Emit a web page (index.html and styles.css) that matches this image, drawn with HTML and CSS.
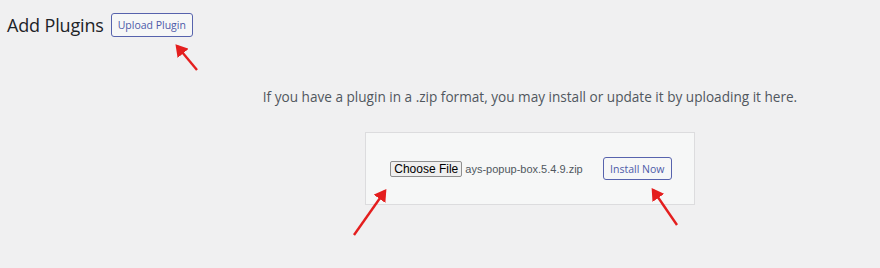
FILE: index.html
```html
<!DOCTYPE html>
<html lang="en">
<head>
    <meta charset="UTF-8">
    <title>Add Plugins</title>
    <link rel="stylesheet" href="styles.css">
</head>
<body>
    <div class="wrap">
        <div class="page-head">
            <h1>Add Plugins</h1>
            <button class="wp-btn upload-btn">Upload Plugin</button>
        </div>

        <!-- Upload form -->
        <div class="upload-area">
            <p class="install-help">If you have a plugin in a .zip format, you may install or update it by uploading it here.</p>
            <form class="upload-form">
                <span class="file-pick">
                    <span class="file-btn">Choose File</span>
                    <span class="file-name">ays-popup-box.5.4.9.zip</span>
                </span>
                <button type="button" class="wp-btn install-btn">Install Now</button>
            </form>
        </div>

        <!-- Annotation arrows -->
        <svg class="arrows" width="880" height="268" viewBox="0 0 880 268">
            <defs>
                <marker id="head" markerWidth="6" markerHeight="6" refX="4" refY="3" orient="auto" markerUnits="strokeWidth">
                    <path d="M0,0 L5,3 L0,6 Z" fill="#e41e1e"/>
                </marker>
            </defs>
            <line x1="197" y1="70" x2="177" y2="46" stroke="#e41e1e" stroke-width="2.4" marker-end="url(#head)"/>
            <line x1="354" y1="235" x2="385" y2="191" stroke="#e41e1e" stroke-width="2.4" marker-end="url(#head)"/>
            <line x1="677" y1="225" x2="653" y2="190" stroke="#e41e1e" stroke-width="2.4" marker-end="url(#head)"/>
        </svg>
    </div>
</body>
</html>
```

FILE: styles.css
```css
body {
    margin: 0;
    background-color: #f0f0f1;
    font-family: 'Open Sans', 'Noto Sans', sans-serif;
    color: #3c434a;
}
.wrap {
    position: relative;
    height: 268px;
    overflow: hidden;
}
.page-head {
    display: flex;
    align-items: center;
    gap: 7px;
    padding: 13px 0 0 7px;
}
.page-head h1 {
    margin: 0;
    font-size: 18px;
    letter-spacing: -0.15px;
    font-weight: 400;
    color: #1d2327;
}
.wp-btn {
    font-family: 'Open Sans', 'Noto Sans', sans-serif;
    background-color: #f6f7f7;
    color: #4d5aa8;
    border: 1px solid #5763ad;
    border-radius: 3px;
    cursor: pointer;
}
.upload-btn {
    width: 82px;
    height: 24px;
    font-size: 10.5px;
    padding: 0;
}
.upload-area {
    margin-left: 180px;
    text-align: center;
}
.install-help {
    margin: 50px 0 0;
    font-size: 13.6px;
    line-height: 20px;
    color: #50575e;
}
.upload-form {
    width: 330px;
    height: 73px;
    box-sizing: border-box;
    margin: 25px auto 0;
    background-color: #f6f7f7;
    border: 1px solid #dcdcde;
    display: flex;
    align-items: center;
    justify-content: center;
    gap: 20px;
    padding-left: 2px;
}
.file-pick {
    display: flex;
    align-items: center;
    gap: 3px;
}
.file-btn {
    box-sizing: border-box;
    width: 72px;
    height: 16px;
    line-height: 14px;
    font-family: 'Liberation Sans', Arial, sans-serif;
    font-size: 12px;
    color: #000;
    background-color: #efefef;
    border: 1px solid #8f8f8f;
    border-radius: 2px;
}
.file-name {
    font-family: 'Liberation Sans', Arial, sans-serif;
    font-size: 11px;
    color: #50575e;
}
.install-btn {
    width: 69px;
    height: 23px;
    font-size: 10.5px;
    padding: 0;
}
.arrows {
    position: absolute;
    top: 0;
    left: 0;
    pointer-events: none;
}
```
